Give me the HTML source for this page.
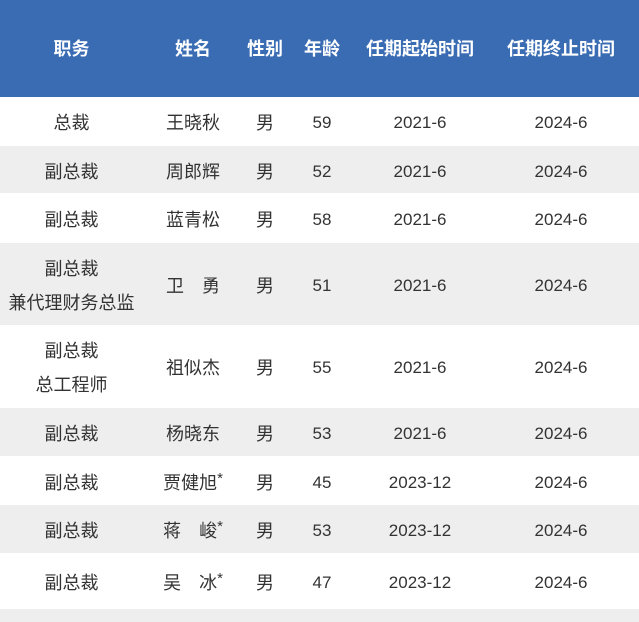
<!DOCTYPE html>
<html><head><meta charset="utf-8"><style>
body{margin:0;width:639px;height:622px;overflow:hidden;background:#fff;font-family:"Liberation Sans","Noto Sans CJK SC",sans-serif;color:#333;font-size:18px}
.r{position:absolute;left:0;width:639px;display:flex;align-items:center}
.r div{text-align:center;line-height:34px;position:relative;top:2px}
.h div{top:0}
.c1{width:143px}.c2{width:100px}.c3{width:44px}.c4{width:70px}.c5{width:126px}.c6{width:156px}
.h{background:#3a6cb4;color:#fff;font-weight:bold}
.g{background:#eeeeee}
.s{font-size:15px;position:relative;top:-6px;vertical-align:baseline;line-height:0}
.n{font-size:17px}
</style></head><body>
<div class="r h" style="top:0;height:97px"><div class="c1">职务</div><div class="c2">姓名</div><div class="c3">性别</div><div class="c4">年龄</div><div class="c5">任期起始时间</div><div class="c6">任期终止时间</div></div>
<div class="r" style="top:97px;height:48px"><div class="c1">总裁</div><div class="c2">王晓秋</div><div class="c3">男</div><div class="c4 n">59</div><div class="c5 n">2021-6</div><div class="c6 n">2024-6</div></div>
<div class="r g" style="top:146px;height:47px"><div class="c1">副总裁</div><div class="c2">周郎辉</div><div class="c3">男</div><div class="c4 n">52</div><div class="c5 n">2021-6</div><div class="c6 n">2024-6</div></div>
<div class="r" style="top:194px;height:48px"><div class="c1">副总裁</div><div class="c2">蓝青松</div><div class="c3">男</div><div class="c4 n">58</div><div class="c5 n">2021-6</div><div class="c6 n">2024-6</div></div>
<div class="r g" style="top:243px;height:82px"><div class="c1">副总裁<br>兼代理财务总监</div><div class="c2">卫　勇</div><div class="c3">男</div><div class="c4 n">51</div><div class="c5 n">2021-6</div><div class="c6 n">2024-6</div></div>
<div class="r" style="top:325px;height:82px"><div class="c1">副总裁<br>总工程师</div><div class="c2">祖似杰</div><div class="c3">男</div><div class="c4 n">55</div><div class="c5 n">2021-6</div><div class="c6 n">2024-6</div></div>
<div class="r g" style="top:408px;height:48px"><div class="c1">副总裁</div><div class="c2">杨晓东</div><div class="c3">男</div><div class="c4 n">53</div><div class="c5 n">2021-6</div><div class="c6 n">2024-6</div></div>
<div class="r" style="top:456px;height:49px"><div class="c1">副总裁</div><div class="c2">贾健旭<span class="s">*</span></div><div class="c3">男</div><div class="c4 n">45</div><div class="c5 n">2023-12</div><div class="c6 n">2024-6</div></div>
<div class="r g" style="top:505px;height:48px"><div class="c1">副总裁</div><div class="c2">蒋　峻<span class="s">*</span></div><div class="c3">男</div><div class="c4 n">53</div><div class="c5 n">2023-12</div><div class="c6 n">2024-6</div></div>
<div class="r" style="top:553px;height:56px"><div class="c1">副总裁</div><div class="c2">吴　冰<span class="s">*</span></div><div class="c3">男</div><div class="c4 n">47</div><div class="c5 n">2023-12</div><div class="c6 n">2024-6</div></div>
<div class="r g" style="top:609px;height:13px"></div>
</body></html>
